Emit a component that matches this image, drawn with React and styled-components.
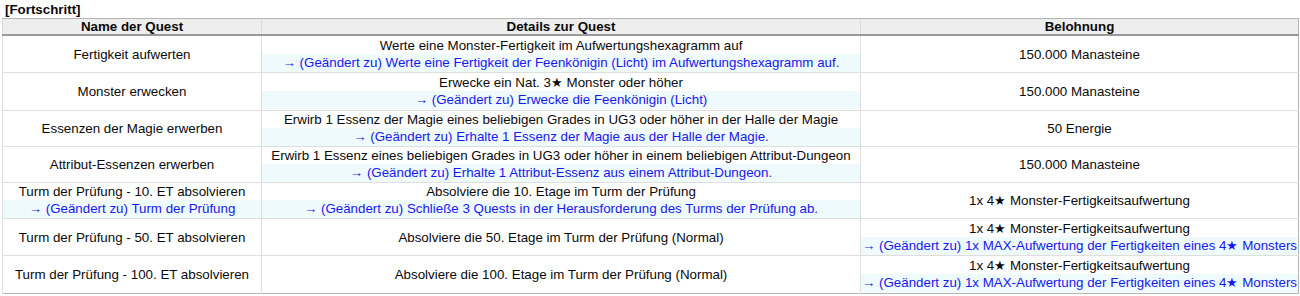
import React from "react";
import styled, { createGlobalStyle } from "styled-components";

const Global = createGlobalStyle`
    body {
        margin: 0;
        padding: 2px;
        background: #fff;
        font-family: "Liberation Sans", Arial, sans-serif;
        font-size: 10pt;
        color: #0a0a0a;
    }
`;

const Title = styled.div`
    font-weight: bold;
    line-height: 16px;
    padding: 0 3px;
`;

const Table = styled.table`
    width: 1296px;
    border-collapse: collapse;
    table-layout: fixed;
    border: 1px solid #b4b4b4;
`;

const Head = styled.th`
    background: #eeeeee;
    font-weight: bold;
    height: 15px;
    line-height: 15px;
    padding: 0;
    border-top: 1px solid #b4b4b4;
    border-bottom: 2px solid #9a9a9a;
    border-left: 1px solid #dadada;
`;

const Cell = styled.td`
    padding: 0;
    text-align: center;
    vertical-align: middle;
    white-space: nowrap;
    height: ${p => p.$h}px;
    border-top: 1px solid #dedede;
    border-left: 1px solid #dedede;
`;

const Line = styled.div`
    line-height: 17px;
    height: 17px;
`;

const Changed = styled(Line)`
    color: #1818f0;
    background: #eefafc;
    padding-bottom: 1px;
`;

const rows = [
    {
        name: ["Fertigkeit aufwerten"],
        details: [
            "Werte eine Monster-Fertigkeit im Aufwertungshexagramm auf",
            "→ (Geändert zu) Werte eine Fertigkeit der Feenkönigin (Licht) im Aufwertungshexagramm auf.",
        ],
        reward: ["150.000 Manasteine"],
        h: 36,
    },
    {
        name: ["Monster erwecken"],
        details: [
            "Erwecke ein Nat. 3★ Monster oder höher",
            "→ (Geändert zu) Erwecke die Feenkönigin (Licht)",
        ],
        reward: ["150.000 Manasteine"],
        h: 37,
    },
    {
        name: ["Essenzen der Magie erwerben"],
        details: [
            "Erwirb 1 Essenz der Magie eines beliebigen Grades in UG3 oder höher in der Halle der Magie",
            "→ (Geändert zu) Erhalte 1 Essenz der Magie aus der Halle der Magie.",
        ],
        reward: ["50 Energie"],
        h: 35,
    },
    {
        name: ["Attribut-Essenzen erwerben"],
        details: [
            "Erwirb 1 Essenz eines beliebigen Grades in UG3 oder höher in einem beliebigen Attribut-Dungeon",
            "→ (Geändert zu) Erhalte 1 Attribut-Essenz aus einem Attribut-Dungeon.",
        ],
        reward: ["150.000 Manasteine"],
        h: 35,
    },
    {
        name: [
            "Turm der Prüfung - 10. ET absolvieren",
            "→ (Geändert zu) Turm der Prüfung",
        ],
        details: [
            "Absolviere die 10. Etage im Turm der Prüfung",
            "→ (Geändert zu) Schließe 3 Quests in der Herausforderung des Turms der Prüfung ab.",
        ],
        reward: ["1x 4★ Monster-Fertigkeitsaufwertung"],
        h: 34,
    },
    {
        name: ["Turm der Prüfung - 50. ET absolvieren"],
        details: ["Absolviere die 50. Etage im Turm der Prüfung (Normal)"],
        reward: [
            "1x 4★ Monster-Fertigkeitsaufwertung",
            "→ (Geändert zu) 1x MAX-Aufwertung der Fertigkeiten eines 4★ Monsters",
        ],
        h: 36,
    },
    {
        name: ["Turm der Prüfung - 100. ET absolvieren"],
        details: ["Absolviere die 100. Etage im Turm der Prüfung (Normal)"],
        reward: [
            "1x 4★ Monster-Fertigkeitsaufwertung",
            "→ (Geändert zu) 1x MAX-Aufwertung der Fertigkeiten eines 4★ Monsters",
        ],
        h: 37,
    },
];

const Content = ({ lines, h }) => (
    <Cell $h={h}>
        {lines.length === 1
            ? lines[0]
            : lines.map((t, i) =>
                  i === 0 ? <Line key={i}>{t}</Line> : <Changed key={i}>{t}</Changed>
              )}
    </Cell>
);

export default function App() {
    return (
        <>
            <Global />
            <Title>[Fortschritt]</Title>
            <Table>
                <colgroup>
                    <col style={{ width: 259 }} />
                    <col style={{ width: 599 }} />
                    <col style={{ width: 438 }} />
                </colgroup>
                <thead>
                    <tr>
                        <Head>Name der Quest</Head>
                        <Head>Details zur Quest</Head>
                        <Head>Belohnung</Head>
                    </tr>
                </thead>
                <tbody>
                    {rows.map((r, i) => (
                        <tr key={i}>
                            <Content lines={r.name} h={r.h} />
                            <Content lines={r.details} h={r.h} />
                            <Content lines={r.reward} h={r.h} />
                        </tr>
                    ))}
                </tbody>
            </Table>
        </>
    );
}
